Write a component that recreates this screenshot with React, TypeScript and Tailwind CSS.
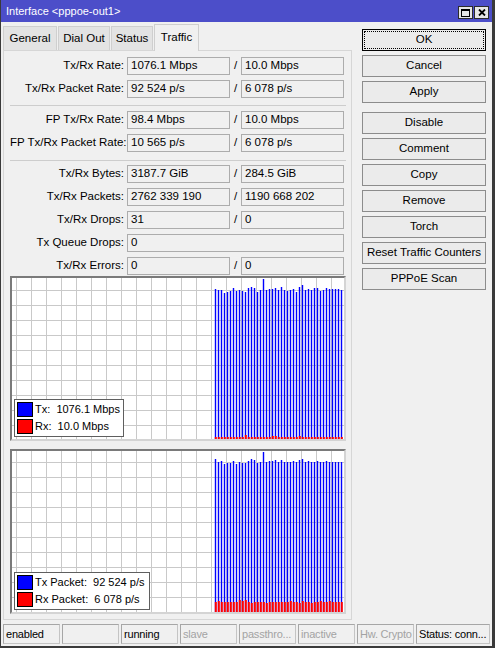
import React from "react";

const tops1 = [11,12,12,15,14,13,10,13,12,13,14,10,9,10,14,12,1,12,11,11,10,12,9,12,13,12,11,14,9,7,12,11,12,10,10,13,12,10,11,11,11,11,12];
const reds1 = tops1.map((_, i) => (i === 10 ? 4 : i === 19 || i === 20 || i === 28 ? 3 : 2));
const tops2 = [8,11,10,13,12,12,10,13,11,12,12,10,8,9,12,11,1,11,10,10,9,11,9,11,11,11,10,11,9,8,11,10,11,11,10,11,11,10,11,11,11,11,11];
const reds2 = [10,11,10,10,10,10,10,10,12,11,12,10,9,10,10,10,10,9,10,10,10,10,10,10,10,11,10,10,9,11,10,10,9,10,10,11,10,10,11,10,10,10,10];

const W = 332;
const H = 161;

function Chart({ tops, reds, lineOff, legend, legendW }: { tops: number[]; reds: number[]; lineOff: number; legend: [string, string]; legendW: string }) {
  const vlines: number[] = [];
  for (let x = 4; x < W; x += 15) vlines.push(x);
  const hlines: number[] = [];
  for (let y = lineOff; y < H; y += 15) hlines.push(y);
  return (
    <div className="relative h-[165px] w-[336px] border-2 border-t-[#7a7a7a] border-l-[#7a7a7a] border-r-[#d4d4d4] border-b-[#d4d4d4] bg-white">
      <svg width={W} height={H} className="block">
        <g shapeRendering="crispEdges">
          {vlines.map((x) => (
            <line key={"v" + x} x1={x + 0.5} y1={0} x2={x + 0.5} y2={H} stroke="#c9c9c9" strokeWidth={1} />
          ))}
          {hlines.map((y) => (
            <line key={"h" + y} x1={0} y1={y + 0.5} x2={W} y2={y + 0.5} stroke="#c9c9c9" strokeWidth={1} />
          ))}
        </g>
        {tops.map((t, i) => (
          <rect key={"b" + i} x={202.8 + 3 * i} y={t} width={1.4} height={H - t} fill="#0000ff" />
        ))}
        {reds.map((h, i) => (
          <rect key={"r" + i} x={202.8 + 3 * i} y={H - h} width={2} height={h} fill="#ff0000" />
        ))}
      </svg>
      <div className={`absolute left-[2px] top-[121px] h-[38px] ${legendW} border border-[#5f5f5f] bg-white pl-[2px] pt-[2px] flex flex-col gap-[2px]`}>
        <div className="flex h-[15px] items-center gap-[2px]">
          <div className="h-[15px] w-[16px] border border-black bg-[#0000ff]" />
          <span className="whitespace-pre text-[11px] leading-none">{legend[0]}</span>
        </div>
        <div className="flex h-[15px] items-center gap-[2px]">
          <div className="h-[15px] w-[16px] border border-black bg-[#ff0000]" />
          <span className="whitespace-pre text-[11px] leading-none">{legend[1]}</span>
        </div>
      </div>
    </div>
  );
}

function Box({ v, w = "w-[103px]" }: { v: string; w?: string }) {
  return (
    <div className={`flex h-[18px] ${w} items-center border border-[#acacac] bg-[#f0f0f0] pl-[3px] text-[11.5px] whitespace-nowrap overflow-hidden`}>
      {v}
    </div>
  );
}

function Row({ label, a, b, mb = "mb-[5px]" }: { label: string; a: string; b?: string; mb?: string }) {
  return (
    <div className={`flex h-[18px] items-center ${mb}`}>
      <div className="w-[114px] text-right text-[11.5px] whitespace-nowrap">{label}</div>
      <div className="w-[3px]" />
      {b === undefined ? (
        <Box v={a} w="w-[217px]" />
      ) : (
        <>
          <Box v={a} />
          <div className="w-[11px] text-center text-[11.5px]">/</div>
          <Box v={b} />
        </>
      )}
    </div>
  );
}

function Btn({ label, mb = "mb-[4px]" }: { label: string; mb?: string }) {
  return (
    <div className={`flex h-[22px] w-[124px] items-center justify-center border border-[#8c8c8c] bg-[#ebebeb] text-[11.5px] ${mb}`}>
      {label}
    </div>
  );
}

function Cell({ text, gray, w = "w-[57px]" }: { text: string; gray?: boolean; w?: string }) {
  return (
    <div
      className={`flex h-[20px] ${w} items-center overflow-hidden whitespace-nowrap border border-[#c4c4c4] border-t-[#a6a6a6] border-l-[#a6a6a6] pl-[2px] text-[11px] tracking-[-0.2px] ${gray ? "text-[#a3a3a3]" : "text-black"}`}
    >
      {text}
    </div>
  );
}

export default function App() {
  return (
    <div className="flex h-[648px] w-[495px] flex-col overflow-hidden border-l border-r-[3px] border-b-2 border-[#3a3a3a] bg-[#f0f0f0] font-['Liberation_Sans',Arial,sans-serif] text-black">
      <div className="flex h-[22px] shrink-0 items-center bg-[#4c4ec9] pl-[5px] pr-[3px]">
        <div className="flex-1 text-[11px] text-white">Interface &lt;pppoe-out1&gt;</div>
        <div className="mt-[3px] flex gap-[1px]">
          <div className="flex h-[13px] w-[15px] items-center justify-center border border-[#2c2c2c] bg-[#e6e6e6]">
            <svg width="9" height="8" viewBox="0 0 9 8">
              <rect x="0.5" y="0.5" width="8" height="7" fill="none" stroke="#000" strokeWidth="1" />
              <rect x="0" y="0" width="9" height="2" fill="#000" />
            </svg>
          </div>
          <div className="flex h-[13px] w-[15px] items-center justify-center border border-[#2c2c2c] bg-[#e6e6e6]">
            <svg width="8" height="7" viewBox="0 0 8 7">
              <path d="M1 0.5 L7 6.5 M7 0.5 L1 6.5" stroke="#000" strokeWidth="1.8" />
            </svg>
          </div>
        </div>
      </div>

      <div className="flex pt-[2px]">
        <div className="ml-[2px] flex w-[349px] flex-col">
          <div className="flex h-[26px] items-end">
            <div className="flex h-[24px] w-[54px] items-center justify-center border border-b-0 border-[#cfcfcf] bg-[#e3e3e3] text-[11.5px]">General</div>
            <div className="ml-[1px] flex h-[24px] w-[52px] items-center justify-center border border-b-0 border-[#cfcfcf] bg-[#e3e3e3] text-[11.5px]">Dial Out</div>
            <div className="ml-[1px] flex h-[24px] w-[42px] items-center justify-center border border-b-0 border-[#cfcfcf] bg-[#e3e3e3] text-[11.5px]">Status</div>
            <div className="relative z-10 mb-[-1px] ml-[1px] flex h-[27px] w-[45px] items-start justify-center border border-b-0 border-[#cfcfcf] bg-[#f0f0f0] pt-[4px] text-[11.5px]">Traffic</div>
          </div>
          <div className="flex h-[570px] flex-col border border-[#d6d6d6] pl-[6px] pr-[5px] pt-[6px]">
            <Row label="Tx/Rx Rate:" a="1076.1 Mbps" b="10.0 Mbps" />
            <Row label="Tx/Rx Packet Rate:" a="92 524 p/s" b="6 078 p/s" />
            <div className="mt-[2px] mb-[5px] h-px w-[336px] bg-[#cdcdcd]" />
            <Row label="FP Tx/Rx Rate:" a="98.4 Mbps" b="10.0 Mbps" />
            <Row label="FP Tx/Rx Packet Rate:" a="10 565 p/s" b="6 078 p/s" />
            <div className="mt-[3px] mb-[4px] h-px w-[336px] bg-[#cdcdcd]" />
            <Row label="Tx/Rx Bytes:" a="3187.7 GiB" b="284.5 GiB" />
            <Row label="Tx/Rx Packets:" a="2762 339 190" b="1190 668 202" />
            <Row label="Tx/Rx Drops:" a="31" b="0" />
            <Row label="Tx Queue Drops:" a="0" />
            <Row label="Tx/Rx Errors:" a="0" b="0" mb="mb-0" />
            <div className="mt-[1px]">
              <Chart tops={tops1} reds={reds1} lineOff={12} legend={["Tx:  1076.1 Mbps", "Rx:  10.0 Mbps"]} legendW="w-[110px]" />
            </div>
            <div className="mt-[8px]">
              <Chart tops={tops2} reds={reds2} lineOff={11} legend={["Tx Packet:  92 524 p/s", "Rx Packet:  6 078 p/s"]} legendW="w-[136px]" />
            </div>
          </div>
        </div>

        <div className="ml-[10px] mt-[5px] flex flex-col">
          <div className="mb-[4px] flex h-[22px] w-[124px] border border-black bg-[#ebebeb] p-[1px]">
            <div className="flex flex-1 items-center justify-center border border-dotted border-black text-[11.5px]">OK</div>
          </div>
          <Btn label="Cancel" />
          <Btn label="Apply" mb="mb-[9px]" />
          <Btn label="Disable" />
          <Btn label="Comment" />
          <Btn label="Copy" />
          <Btn label="Remove" />
          <Btn label="Torch" />
          <Btn label="Reset Traffic Counters" />
          <Btn label="PPPoE Scan" />
        </div>
      </div>

      <div className="mt-[4px] flex gap-[2px] pl-[2px]">
        <Cell text="enabled" />
        <Cell text="" />
        <Cell text="running" />
        <Cell text="slave" gray />
        <Cell text="passthro..." gray />
        <Cell text="inactive" gray />
        <Cell text="Hw. Crypto" gray />
        <Cell text="Status: conn..." w="w-[74px]" />
      </div>
    </div>
  );
}
